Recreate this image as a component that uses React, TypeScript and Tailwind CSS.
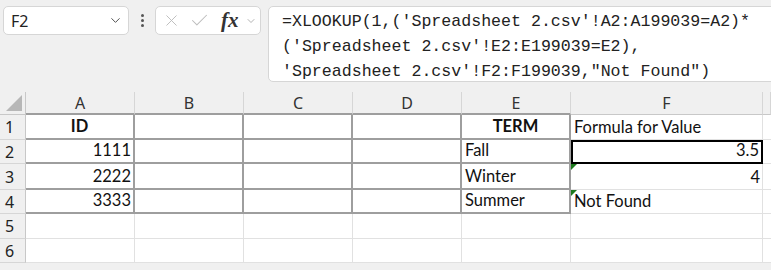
import { ChevronDown, X, Check } from "lucide-react";

const cols = ["A", "B", "C", "D", "E", "F", ""];
const rowHeights = ["h-[25px]", "h-[24px]", "h-[26px]", "h-[24px]", "h-[25px]", "h-[24px]"];

type Cell = { text?: string; align?: "left" | "right" | "center"; bold?: boolean; flag?: boolean };

const data: Cell[][] = [
  [{ text: "ID", align: "center", bold: true }, {}, {}, {}, { text: "TERM", align: "center", bold: true }, { text: "Formula for Value" }],
  [{ text: "1111", align: "right" }, {}, {}, {}, { text: "Fall" }, { text: "3.5", align: "right" }],
  [{ text: "2222", align: "right" }, {}, {}, {}, { text: "Winter" }, { text: "4", align: "right", flag: true }],
  [{ text: "3333", align: "right" }, {}, {}, {}, { text: "Summer" }, { text: "Not Found", flag: true }],
  [{}, {}, {}, {}, {}, {}],
  [{}, {}, {}, {}, {}, {}],
];

function FormulaBar() {
  return (
    <div className="flex items-start h-[92px] pt-[6px] pl-[3px]">
      <div className="shrink-0 w-[126px] h-[29px] bg-white border border-[#d6d6d6] rounded-[5px] flex items-center justify-between pl-[7px] pr-[5px]">
        <span className="text-[16px] text-[#222]">F2</span>
        <ChevronDown size={15} strokeWidth={1.5} className="text-[#444]" />
      </div>
      <div className="shrink-0 w-[26px] h-[29px] flex flex-col items-center justify-center gap-[2px]">
        <span className="w-[3px] h-[3px] bg-[#555] rounded-full" />
        <span className="w-[3px] h-[3px] bg-[#555] rounded-full" />
        <span className="w-[3px] h-[3px] bg-[#555] rounded-full" />
      </div>
      <div className="shrink-0 w-[106px] h-[29px] bg-white border border-[#d6d6d6] rounded-[5px] flex items-center pl-[6px]">
        <X size={19} strokeWidth={1.2} className="text-[#bdbdbd]" />
        <Check size={21} strokeWidth={1.2} className="text-[#bdbdbd] ml-[8px]" />
        <span className="ml-[11px] text-[21px] italic font-bold text-[#333] leading-none" style={{ fontFamily: '"Liberation Serif", serif' }}>
          fx
        </span>
        <ChevronDown size={12} strokeWidth={1.5} className="text-[#999] ml-[6px]" />
      </div>
      <div
        className="ml-[7px] w-[520px] h-[76px] bg-white border border-[#d6d6d6] rounded-[5px] pl-[13px] pt-[2px] text-[16.6px] leading-[25px] text-[#222] whitespace-pre shrink-0"
        style={{ fontFamily: '"Liberation Mono", monospace' }}
      >
        <div>=XLOOKUP(1,('Spreadsheet 2.csv'!A2:A199039=A2)*</div>
        <div>('Spreadsheet 2.csv'!E2:E199039=E2),</div>
        <div>'Spreadsheet 2.csv'!F2:F199039,"Not Found")</div>
      </div>
    </div>
  );
}

export default function App() {
  return (
    <div className="w-[771px] h-[270px] overflow-hidden bg-[#f0f0f0]" style={{ fontFamily: '"Noto Sans", sans-serif' }}>
      <FormulaBar />
      <div className="grid grid-cols-[26px_109px_109px_109px_109px_109px_192px_1fr]">
        <div className="h-[23px] border-r border-b border-[#c8c8c8] flex items-end justify-end pr-[3px] pb-[3px]">
          <svg width="16" height="16" viewBox="0 0 16 16">
            <polygon points="16,0 16,16 0,16" fill="#b7b7b7" />
          </svg>
        </div>
        {cols.map((c, i) => (
          <div
            key={"h" + i}
            className={`h-[23px] flex items-center justify-center text-[16px] text-[#333] border-r border-[#d6d6d6] ${
              i < 5 ? "border-b-2 border-b-[#9e9e9e]" : "border-b border-b-[#c8c8c8]"
            }`}
          >
            {c}
          </div>
        ))}
        {data.map((row, r) => (
          <>
            <div
              key={"r" + r}
              className={`${rowHeights[r]} pl-[5px] flex items-center text-[16px] text-[#222] border-r border-r-[#c8c8c8] border-b border-b-[#d6d6d6]`}
            >
              {r + 1}
            </div>
            {row.map((cell, c) => {
              const inTable = r < 4 && c < 5;
              const selected = r === 1 && c === 5;
              const border = selected
                ? "border-2 border-black"
                : inTable
                ? "border-r-2 border-b-2 border-[#9e9e9e]"
                : "border-r border-b border-[#e1e1e1]";
              const align =
                cell.align === "right" ? "justify-end pr-[2px]" : cell.align === "center" ? "justify-center" : "justify-start pl-[3px]";
              return (
                <div
                  key={r + "-" + c}
                  className={`${rowHeights[r]} relative bg-white flex items-end pb-[1px] text-[16.5px] leading-[22px] text-[#111] ${border} ${align} ${
                    cell.bold ? "font-bold" : ""
                  }`}
                  style={{ fontFamily: "Lato, sans-serif" }}
                >
                  {cell.flag && (
                    <span className="absolute left-0 top-0 w-0 h-0 border-t-[6px] border-r-[6px] border-t-[#1d7a1d] border-r-transparent" />
                  )}
                  {cell.text}
                </div>
              );
            })}
            <div key={"g" + r} className={`${rowHeights[r]} bg-white border-b border-[#e1e1e1]`} />
          </>
        ))}
      </div>
    </div>
  );
}
